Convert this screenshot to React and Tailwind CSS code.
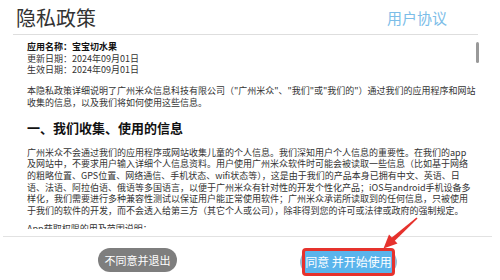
import React from "react";

const info = [
  { t: "应用名称：宝宝切水果", b: true },
  { t: "更新日期：2024年09月01日" },
  { t: "生效日期：2024年09月01日" },
];

const intro = [
  '本隐私政策详细说明了广州米众信息科技有限公司（"广州米众"、"我们"或"我们的"）通过我们的应用程序和网站',
  "收集的信息，以及我们将如何使用这些信息。",
];

const section = [
  "广州米众不会通过我们的应用程序或网站收集儿童的个人信息。我们深知用户个人信息的重要性。在我们的app",
  "及网站中，不要求用户输入详细个人信息资料。用户使用广州米众软件时可能会被读取一些信息（比如基于网络",
  "的粗略位置、GPS位置、网络通信、手机状态、wifi状态等），这是由于我们的产品本身已拥有中文、英语、日",
  "语、法语、阿拉伯语、俄语等多国语言，以便于广州米众有针对性的开发个性化产品；iOS与android手机设备多",
  "样化，我们需要进行多种兼容性测试以保证用户能正常使用软件；广州米众承诺所读取到的任何信息，只被使用",
  "于我们的软件的开发，而不会透入给第三方（其它个人或公司），除非得到您的许可或法律或政府的强制规定。",
];

export default function App() {
  return (
    <div className="relative w-[500px] h-[280px] overflow-hidden bg-white font-['Noto_Sans_CJK_SC',sans-serif]">
      {/* header */}
      <div className="ml-[13px] w-[465px] h-[35px] border-b border-[#dedede] flex justify-between">
        <div className="pl-[3px] pt-[5px] text-[20px] leading-[26px] text-[#333]">隐私政策</div>
        <div className="pr-[31px] pt-[8px] text-[15px] leading-[20px] text-[#7cbde8]">用户协议</div>
      </div>

      {/* scroll content */}
      <div className="relative h-[194px] overflow-hidden pl-[27px] pt-[6px] text-[9px] leading-[11.7px] text-[#333]">
        {info.map((l, i) => (
          <div key={i} className={"whitespace-nowrap " + (l.b ? "font-bold text-[#111]" : "")}>
            {l.t}
          </div>
        ))}
        <div className="mt-[9px]">
          {intro.map((l, i) => (
            <div key={i} className="whitespace-nowrap">{l}</div>
          ))}
        </div>
        <div className="mt-[10px] text-[13px] leading-[18px] font-bold text-[#111] whitespace-nowrap">
          一、我们收集、使用的信息
        </div>
        <div className="mt-[10px]">
          {section.map((l, i) => (
            <div key={i} className="whitespace-nowrap">{l}</div>
          ))}
        </div>
        <div className="mt-[6px] whitespace-nowrap">App获取权限的用及范围说明：</div>
      </div>

      {/* scrollbar thumb */}
      <div className="absolute left-[476px] top-[42px] w-[3px] h-[21px] rounded-full bg-[#999]" />

      {/* bottom separator */}
      <div className="mt-[7px] ml-[3px] w-[489px] border-t border-[#e2e2e2]" />

      {/* buttons */}
      <div className="flex items-start pt-[11px]">
        <div className="ml-[98px] w-[79px] h-[24px] rounded-full bg-[#7e7e7e] flex items-center justify-center text-white text-[11px] leading-[14px]">
          不同意并退出
        </div>
        <div className="relative ml-[123px] mt-[2px]">
          <div className="w-[97px] h-[24px] rounded-full bg-[#9dbdd2]" />
          <div className="absolute left-[2px] -top-[2px] w-[93px] h-[28px] border-[3px] border-[#e6322d] rounded-[4px] bg-[#5ab4ec] flex items-center justify-center text-white text-[12px] leading-[14px] whitespace-nowrap">
            同意 并开始使用
          </div>
        </div>
      </div>

      {/* annotation arrow */}
      <svg className="absolute left-0 top-0 pointer-events-none" width="500" height="280" viewBox="0 0 500 280">
        <polygon points="417.5,218.5 416.5,217.5 390,239 393,242.5" fill="#e6322d" />
        <polygon points="383.5,248.5 389,234.5 397.5,243.5" fill="#e6322d" />
      </svg>
    </div>
  );
}
